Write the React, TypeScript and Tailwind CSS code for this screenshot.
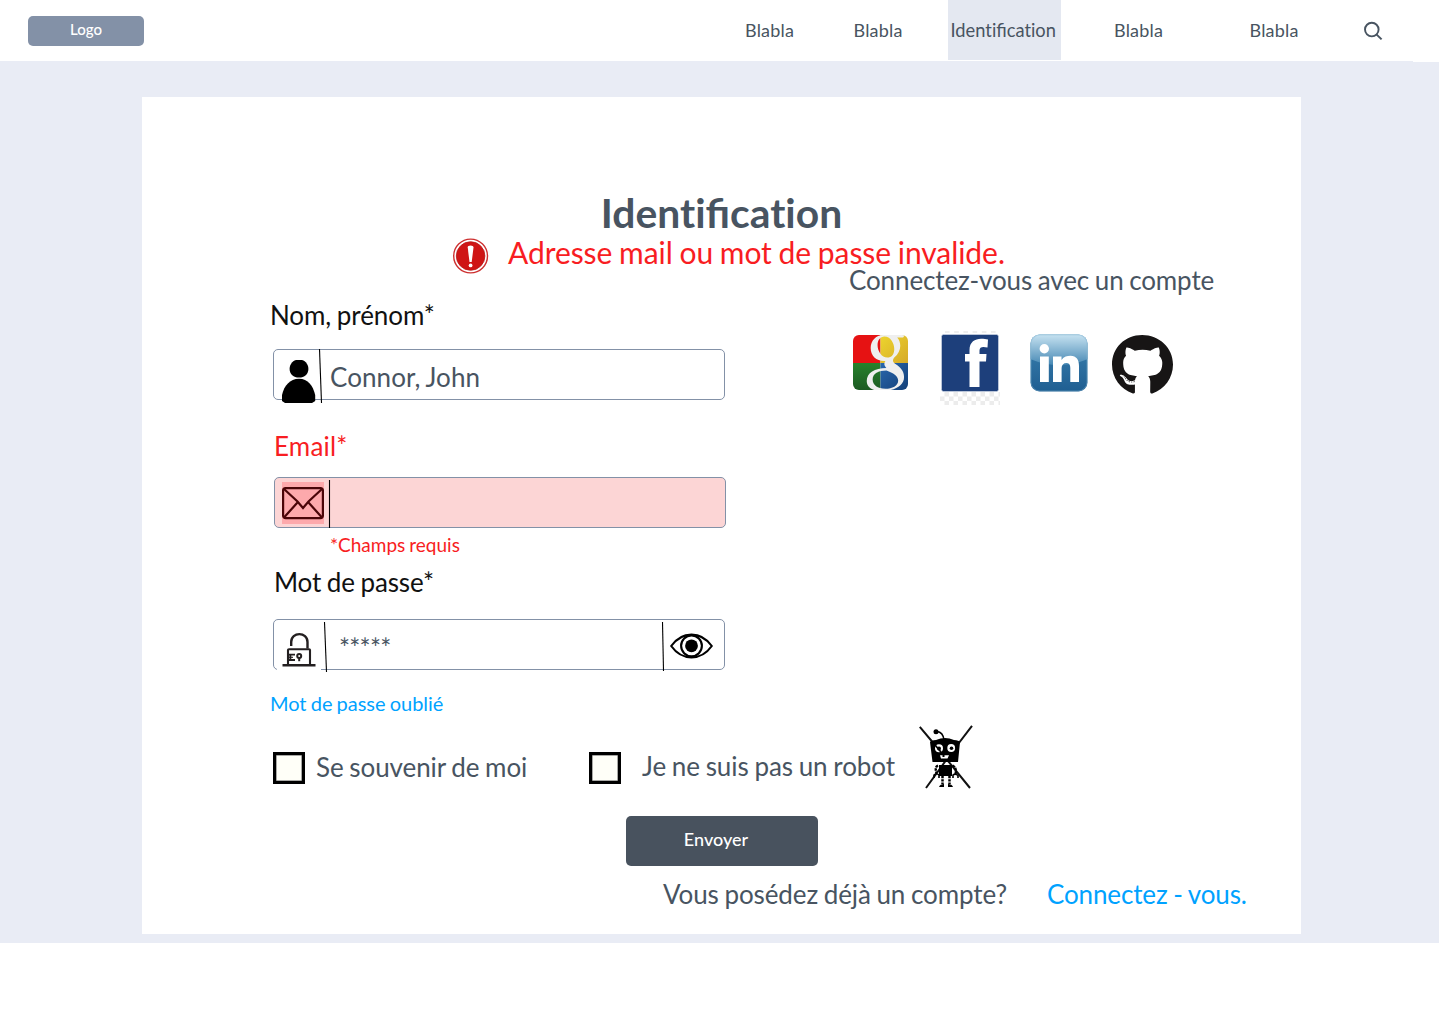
import React from "react";
import { FaGithub } from "react-icons/fa";

const label = "block h-[26px] text-[26px] leading-[26px] whitespace-nowrap";

function SearchIcon() {
  return (
    <svg className="block h-5 w-5" viewBox="0 0 20 20" fill="none" stroke="#485461" strokeWidth="1.9">
      <circle cx="8.8" cy="8.6" r="6.8" />
      <path d="M13.4 13.4 L18.6 18.4" strokeWidth="2" />
    </svg>
  );
}

function AlertIcon() {
  return (
    <svg className="block h-9 w-9 shrink-0" viewBox="0 0 36 36">
      <circle cx="17.6" cy="18" r="16.9" fill="#fff" stroke="#cd3030" strokeWidth="1.4" />
      <circle cx="17.6" cy="18" r="14.3" fill="#cf1515" stroke="#b81919" strokeWidth="0.8" />
      <path d="M14.7 9.2 Q14.6 7.4 17.6 7.4 Q20.6 7.4 20.5 9.2 L18.7 24 H16.5 Z" fill="#fff" />
      <circle cx="17.6" cy="27.4" r="1.9" fill="#fff" />
    </svg>
  );
}

function PersonIcon() {
  return (
    <svg className="block h-[43px] w-[34px]" viewBox="0 0 34 43">
      <path d="M14 0 H20 C24 1 26.4 5 26.4 9 C26.4 14 22.5 17.6 17 17.6 C11.5 17.6 7.6 14 7.6 9 C7.6 5 10 1 14 0 Z" />
      <path d="M0 41 V35 C2 26 8 18.8 17 18.8 C26 18.8 31 26 33.2 35 V41 L30 43 H3 Z" />
    </svg>
  );
}

function MailIcon() {
  return (
    <svg className="block h-[42px] w-[42px] bg-[#fda9ac]" viewBox="0 0 42 42" fill="none" stroke="#4a0508" strokeWidth="2.2">
      <rect x="1.1" y="6.1" width="39.8" height="30" rx="2.5" />
      <path d="M2 7 L15.5 19.5 L21 26 L26.5 19.5 L40 7 M2 35.5 L15.5 20.5 M40 35.5 L26.5 20.5" />
    </svg>
  );
}

function LockIcon() {
  return (
    <svg className="block h-[42px] w-[44px] bg-white" viewBox="0 0 44 42" fill="none" stroke="#231f20" strokeWidth="2">
      <path d="M14.2 17 V13 C14.2 2.5 30.5 2.5 30.5 13 V19.6" strokeWidth="2.4" />
      <path d="M11 36 V21 Q11 20.2 12 20.2 H32 Q33 20.2 33 21 V36" strokeWidth="2.1" />
      <path d="M5.5 36.3 H38.5" strokeWidth="2.4" />
      <path d="M11 25.6 H18 M11 31 H18 M13.4 25 V31.5" strokeWidth="1.8" />
      <path d="M11 28.3 H16" strokeWidth="1.1" />
      <circle cx="22.2" cy="27" r="2" />
      <path d="M22.2 28 V32.2" />
    </svg>
  );
}

function EyeIcon() {
  return (
    <svg className="block h-[26px] w-[43px]" viewBox="0 0 43 26" fill="none" stroke="#000">
      <path d="M1.2 13 C12 -2.2 31 -2.2 41.8 13 C31 28.2 12 28.2 1.2 13 Z" strokeWidth="2.1" />
      <circle cx="21.5" cy="12.8" r="10.4" strokeWidth="2.1" />
      <circle cx="21.5" cy="12.8" r="6.4" fill="#000" stroke="none" />
    </svg>
  );
}

function GoogleIcon() {
  return (
    <svg className="block h-[55px] w-[55px]" viewBox="0 0 56 55" preserveAspectRatio="none">
      <defs>
        <clipPath id="gClip"><rect width="56" height="55" rx="6" /></clipPath>
        <linearGradient id="gGreen" x1="0" y1="0" x2="0" y2="1"><stop stopColor="#26822b" /><stop offset="1" stopColor="#1c5a22" /></linearGradient>
        <linearGradient id="gBlue" x1="0" y1="0" x2="1" y2="1"><stop stopColor="#2a67ad" /><stop offset="1" stopColor="#133f78" /></linearGradient>
        <linearGradient id="gYellow" x1="0" y1="0" x2="1" y2="1"><stop stopColor="#edd52e" /><stop offset="1" stopColor="#d6aa28" /></linearGradient>
      </defs>
      <g clipPath="url(#gClip)">
        <rect width="28" height="28" fill="#e61213" />
        <rect x="28" width="28" height="28" fill="url(#gYellow)" />
        <rect y="28" width="28" height="27" fill="url(#gGreen)" />
        <rect x="28" y="28" width="28" height="27" fill="url(#gBlue)" />
        <path
          fill="#efefef"
          fillRule="evenodd"
          d="M53 0 H31 C23 0 18 6 18 13 C18 21 24 26.5 33 26 C31 29 32 31 34 33 C22 33 14 38 14 46 C14 52 19 56 29 56 C42 56 52 51 52 42 C52 36 48 32 44 29.5 C40 27 40 25 42 22.5 C49 17 50 8 45 2.5 H51 Z M32 1.5 C38 1.5 42 8 42 14 C42 20 39 22.5 35 22.5 C29 22.5 25 16 25 10 C25 5 28 1.5 32 1.5 Z M34 35.5 C41 38 46 41 46 45.5 C46 51 40 53.8 33 53.8 C25 53.8 20 50 20 44.5 C20 38.5 26 35.5 34 35.5 Z"
        />
      </g>
    </svg>
  );
}

function FacebookIcon() {
  return (
    <svg className="block h-[74px] w-[60px]" viewBox="0 0 60 74">
      <defs>
        <pattern id="checker" width="9" height="9" patternUnits="userSpaceOnUse" x="0" y="61">
          <rect width="9" height="9" fill="#fff" />
          <rect x="4.5" width="4.5" height="4.5" fill="#ececec" />
          <rect y="4.5" width="4.5" height="4.5" fill="#ececec" />
        </pattern>
      </defs>
      <path d="M5 1 H56" stroke="#eee" strokeWidth="2" strokeDasharray="4.6 4.6" />
      <rect y="61" width="60" height="13" fill="url(#checker)" />
      <rect x="1.5" y="3.5" width="57" height="57" rx="2" fill="#1d3f7b" stroke="#d9dfeb" strokeWidth="0.6" />
      <path fill="#fff" d="M29.5 56 V30.5 H25 V23 H29.5 V19 C29.5 11 35 7.8 41 7.8 C44 7.8 46 8 48 8.5 L47.5 16.5 C43 15.5 39.5 15.5 39.5 19.5 V23 H46.5 L46 30.5 H39.5 V56 Z" />
    </svg>
  );
}

function LinkedInIcon() {
  return (
    <svg className="block h-[58px] w-[58px]" viewBox="0 0 58 58">
      <defs>
        <linearGradient id="liBase" x1="0" y1="0" x2="0" y2="1"><stop stopColor="#3e84b2" /><stop offset="1" stopColor="#1f5e91" /></linearGradient>
        <linearGradient id="liShine" x1="0" y1="0" x2="0" y2="1"><stop stopColor="#c9e4f2" /><stop offset="1" stopColor="#4688b4" /></linearGradient>
        <clipPath id="liClip"><rect x="0.5" y="0.5" width="57" height="57" rx="9" /></clipPath>
      </defs>
      <g clipPath="url(#liClip)">
        <rect width="58" height="58" fill="url(#liBase)" />
        <path d="M0 0 H58 V25 Q29 37 0 25 Z" fill="url(#liShine)" />
      </g>
      <rect x="1" y="1" width="56" height="56" rx="9" fill="none" stroke="#8ab8d4" strokeOpacity="0.4" />
      <circle cx="14.3" cy="14.8" r="4.7" fill="#fff" />
      <path fill="#fff" d="M10 22.5 H18.8 V48 H10 Z M23 22.5 H31.5 V26 C34 22.6 37 21.8 40.5 21.8 C46.5 21.8 49 26 49 32 V48 H40.3 V34 C40.3 30.5 39 29 36.5 29 C33.5 29 31.6 31 31.6 34 V48 H23 Z" />
    </svg>
  );
}

function RobotIcon() {
  return (
    <svg className="block h-16 w-[54px]" viewBox="0 0 54 64">
      <path d="M0.8 1.8 L16 20 L51 63 M53 0.8 L33 27 L7 63" fill="none" stroke="#111" strokeWidth="2" />
      <circle cx="17" cy="6.8" r="2.5" />
      <path d="M18 6.5 Q24 7 25 15" fill="none" stroke="#000" strokeWidth="1.6" />
      <path d="M11 17 Q12 15.5 17 15 Q26 11 35 15 Q40 15.5 41 17 L39 37 H13.5 Z" />
      <circle cx="20" cy="23.3" r="4" fill="#fff" />
      <circle cx="32.2" cy="23" r="3.9" fill="#fff" />
      <circle cx="20" cy="23.6" r="2" />
      <path d="M16 20 L22 27" stroke="#000" strokeWidth="1.8" />
      <circle cx="32.5" cy="23.3" r="1.8" />
      <path d="M21 30.2 H23.5 V32 H25.5 V30.2 H30 L28.5 33.5 H22 Z" fill="#fff" />
      <path d="M20 40 H33 V51 H20 Z" />
      <path d="M19 40.5 Q15.5 42 17.5 48 M33.5 40.5 Q38 43 36.5 49" fill="none" stroke="#000" strokeWidth="2.4" strokeDasharray="2.8 0.7" />
      <path d="M15 53 V50 Q17.5 47.5 20 50 V53 M34 53 V50 Q36.5 48 39 50.5 V53" fill="none" stroke="#000" strokeWidth="1.6" />
      <path d="M23.5 51 V59 M30.5 51 V59" stroke="#000" strokeWidth="2.5" strokeDasharray="2.3 0.9" />
      <path d="M20 62 Q21 59 25 59 V62 Z M29 62 V59 Q33 59 34 62 Z" />
    </svg>
  );
}

function Separator({ x1, x2, h, className }: { x1: number; x2: number; h: number; className: string }) {
  return (
    <svg className={"absolute w-1 overflow-visible " + className} style={{ height: h }} fill="none" stroke="#000" strokeWidth="1.1">
      <path d={`M${x1} 0 L${x2} ${h}`} />
    </svg>
  );
}

function Checkbox() {
  return <span className="block h-8 w-8 shrink-0 border-[3px] border-black bg-[#fffff8] shadow-[inset_0_0_0_0.5px_#555]" />;
}

// Keeps the "fi" ligature while leaving "ti" as two separate letters.
function Identification() {
  return (
    <>
      <span className="[font-variant-ligatures:none]">Ident</span>ificat<span className="[font-variant-ligatures:none]">ion</span>
    </>
  );
}

export default function App() {
  return (
    <div className="h-[1024px] w-[1440px] overflow-hidden bg-white font-['Lato',sans-serif] text-[#485461] [word-spacing:-0.055em]">
      <header className="flex h-[61px] items-start pl-7 text-[18px]">
        <div className="mt-4 flex h-[30px] w-[116px] justify-center rounded-[5px] bg-[#8391a7] text-[15px] leading-[27px] font-medium text-white">Logo</div>
        <nav className="ml-[601px] flex h-[60px] leading-[61px]">
          <a className="w-[108px] tracking-[0.2px]">Blabla</a>
          <a className="w-[95px] pl-[0.5px] tracking-[0.2px]">Blabla</a>
          <a className="w-[113px] bg-[#e4e8f1] pl-[2.5px] text-[18.3px] whitespace-nowrap"><Identification /></a>
          <a className="ml-[53px] w-[135px] tracking-[0.2px]">Blabla</a>
          <a className="w-[114px] pl-[0.5px] tracking-[0.2px]">Blabla</a>
        </nav>
        <div className="mt-[21px]"><SearchIcon /></div>
      </header>

      <main className="h-[882px] w-[1439px] bg-[#e9ecf5]">
        <div className="flex h-9 justify-end"><span className="h-px w-[26px] bg-white" /></div>
        <section className="ml-[142px] flex h-[837px] w-[1159px] flex-col bg-white pt-24">
          <h1 className="h-10 text-center text-[40.8px] leading-10 font-bold whitespace-nowrap"><Identification /></h1>
          <div className="mt-1 ml-[311px] flex h-[30px] items-start gap-[19px] text-[#f81d22]">
            <div className="mt-px"><AlertIcon /></div>
            <p className="text-[30px] leading-[30px] tracking-[-0.06px] whitespace-nowrap">Adresse mail ou mot de passe invalide.</p>
          </div>

          <div className="ml-32 flex h-[446px]">
            <form className="w-[579px]">
              <label className={label + " mt-[35px] tracking-[-0.08px] text-[#111]"}>Nom, prénom*</label>
              <div className="relative mt-[21px] ml-[3px] flex h-[51px] w-[452px] items-start rounded-[5px] border border-[#8391a7]">
                <div className="mt-[10px] ml-2"><PersonIcon /></div>
                <Separator className="top-[-1px] left-[45px]" x1={0.5} x2={2.5} h={54} />
                <span className={label + " mt-[14px] ml-[14px] tracking-[0.07px]"}>Connor, John</span>
              </div>

              <label className={label + " mt-[33px] ml-1 tracking-[0.2px] text-[#f81d22]"}>Email*</label>
              <div className="relative mt-[18px] ml-1 flex h-[51px] w-[452px] items-start rounded-[5px] border border-[#8391a7] bg-[#fcd5d5]">
                <div className="mt-1 ml-[7px]"><MailIcon /></div>
                <Separator className="top-[2px] left-[54px]" x1={0.5} x2={0.5} h={48} />
              </div>
              <p className="mt-[7px] ml-[60px] h-5 text-[19px] leading-5 whitespace-nowrap text-[#f81d22]">*Champs requis</p>

              <label className={label + " mt-[14px] ml-1 tracking-[-0.13px] text-[#111]"}>Mot de passe*</label>
              <div className="relative mt-6 ml-[3px] flex h-[51px] w-[452px] items-start rounded-[5px] border border-[#8391a7]">
                <div className="mt-[9px] ml-[3px]"><LockIcon /></div>
                <Separator className="top-[2px] left-[50px]" x1={0.5} x2={2.5} h={50} />
                <span className={label + " mt-[15px] ml-[18px] tracking-[-0.75px]"}>*****</span>
                <Separator className="top-[2px] left-[388px]" x1={0.5} x2={1.5} h={49} />
                <div className="mt-[13px] mr-[11px] ml-auto"><EyeIcon /></div>
              </div>
              <a className="mt-[23px] block h-5 text-[20px] leading-5 tracking-[-0.03px] whitespace-nowrap text-[#00a2ff]">Mot de passe oublié</a>
            </form>

            <aside>
              <h2 className={label + " tracking-[-0.12px]"}>Connectez-vous avec un compte</h2>
              <div className="mt-[38px] ml-[3px] flex items-start">
                <div className="mt-1 ml-px"><GoogleIcon /></div>
                <div className="ml-8"><FacebookIcon /></div>
                <div className="mt-[3px] ml-[30px]"><LinkedInIcon /></div>
                <FaGithub className="mt-[3px] ml-6 block h-[62px] w-[61px] text-[#171515]" preserveAspectRatio="none" />
              </div>
            </aside>
          </div>

          <div className="mt-3 ml-[131px] flex h-16 items-start">
            <div className="mt-[27px]"><Checkbox /></div>
            <span className={label + " mt-[29px] ml-[11px] w-[273px] tracking-[-0.08px]"}>Se souvenir de moi</span>
            <div className="mt-[27px]"><Checkbox /></div>
            <span className={label + " mt-7 ml-[21px] w-[277px] tracking-[-0.06px]"}>Je ne suis pas un robot</span>
            <RobotIcon />
          </div>

          <button className="mt-[27px] ml-[484px] h-[50px] w-48 rounded-[5px] bg-[#48525e] pr-3 pb-[3px] text-[18px] leading-[47px] font-medium text-white">Envoyer</button>

          <div className="mt-[15px] ml-[521px] flex">
            <span className={label + " w-[384px] tracking-[-0.1px]"}>Vous posédez déjà un compte?</span>
            <a className={label + " tracking-[-0.13px] text-[#00a2ff]"}>Connectez - vous.</a>
          </div>
        </section>
      </main>
    </div>
  );
}
